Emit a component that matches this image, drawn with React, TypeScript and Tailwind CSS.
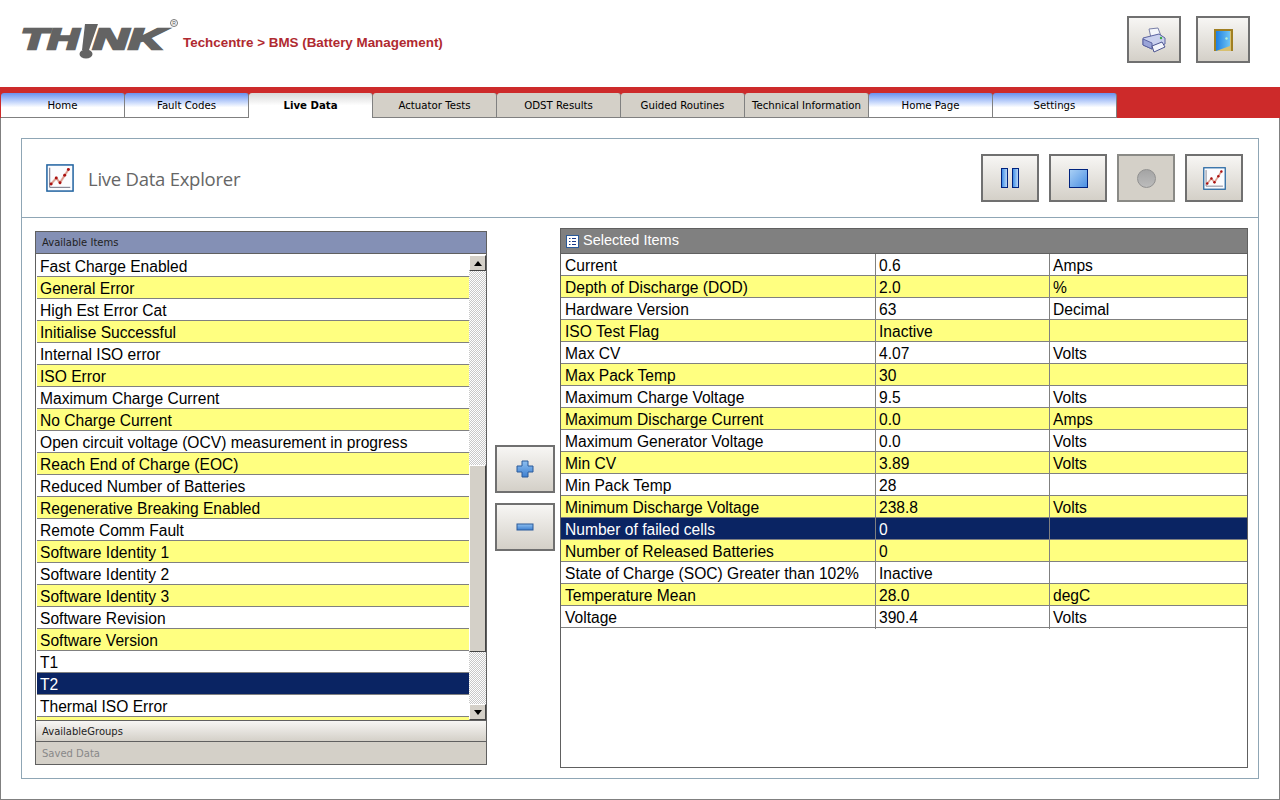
const tabs = [
  { label: "Home", kind: "blue" },
  { label: "Fault Codes", kind: "blue" },
  { label: "Live Data", kind: "active" },
  { label: "Actuator Tests", kind: "grey" },
  { label: "ODST Results", kind: "grey" },
  { label: "Guided Routines", kind: "grey" },
  { label: "Technical Information", kind: "grey" },
  { label: "Home Page", kind: "blue" },
  { label: "Settings", kind: "blue" },
];

const available = [
  "Fast Charge Enabled",
  "General Error",
  "High Est Error Cat",
  "Initialise Successful",
  "Internal ISO error",
  "ISO Error",
  "Maximum Charge Current",
  "No Charge Current",
  "Open circuit voltage (OCV) measurement in progress",
  "Reach End of Charge (EOC)",
  "Reduced Number of Batteries",
  "Regenerative Breaking Enabled",
  "Remote Comm Fault",
  "Software Identity 1",
  "Software Identity 2",
  "Software Identity 3",
  "Software Revision",
  "Software Version",
  "T1",
  "T2",
  "Thermal ISO Error",
];

const selected = [
  ["Current", "0.6", "Amps"],
  ["Depth of Discharge (DOD)", "2.0", "%"],
  ["Hardware Version", "63", "Decimal"],
  ["ISO Test Flag", "Inactive", ""],
  ["Max CV", "4.07", "Volts"],
  ["Max Pack Temp", "30", ""],
  ["Maximum Charge Voltage", "9.5", "Volts"],
  ["Maximum Discharge Current", "0.0", "Amps"],
  ["Maximum Generator Voltage", "0.0", "Volts"],
  ["Min CV", "3.89", "Volts"],
  ["Min Pack Temp", "28", ""],
  ["Minimum Discharge Voltage", "238.8", "Volts"],
  ["Number of failed cells", "0", ""],
  ["Number of Released Batteries", "0", ""],
  ["State of Charge (SOC) Greater than 102%", "Inactive", ""],
  ["Temperature Mean", "28.0", "degC"],
  ["Voltage", "390.4", "Volts"],
];

function rowColor(i: number, isSelected: boolean) {
  if (isSelected) return "bg-[#0a2463] text-white";
  return i % 2 === 1 ? "bg-[#ffff80] text-black" : "bg-white text-black";
}

function ThinkLogo() {
  return (
    <svg width="152" height="46" viewBox="0 0 152 46" className="block">
      <g fill="#636363" stroke="#636363" strokeWidth="2.4" fontFamily="'Liberation Sans', sans-serif" fontWeight="700" fontStyle="italic" fontSize="30">
        <text x="0" y="28" textLength="58" lengthAdjust="spacingAndGlyphs">TH</text>
        <text x="72" y="28" textLength="71" lengthAdjust="spacingAndGlyphs">NK</text>
      </g>
      <path d="M64 3 L77 3 L68 29 L61 29 Z" fill="#636363" />
      <ellipse cx="65" cy="33" rx="6.5" ry="4.5" fill="#636363" />
    </svg>
  );
}

function PrinterIcon() {
  return (
    <svg width="26" height="26" viewBox="0 0 26 26">
      <path d="M8 2 L17 1 L20 9 L10 11 Z" fill="#f4f6fb" stroke="#7a80a8" />
      <path d="M2 11 L18 7 L24 11 L24 17 L11 22 L2 18 Z" fill="#c9d0ee" stroke="#5a62a0" />
      <path d="M2 12 L11 16 L11 22 L2 18 Z" fill="#9aa4d8" stroke="#5a62a0" />
      <path d="M11 19 L21 15 L24 20 L13 25 Z" fill="#f2f4fb" stroke="#4c5490" />
      <circle cx="20" cy="11" r="1.2" fill="#3aa845" />
    </svg>
  );
}

function DoorIcon() {
  return (
    <svg width="19" height="22" viewBox="0 0 19 22">
      <defs>
        <linearGradient id="doorFill" x1="0" x2="1" y1="0" y2="0">
          <stop offset="0" stopColor="#1f7fe0" />
          <stop offset="1" stopColor="#6ec4f4" />
        </linearGradient>
      </defs>
      <path d="M0 0 H19 V22 H17 V2 H2 V22 H0 Z" fill="#a07f22" />
      <path d="M2 2 H17 V22 H2 Z" fill="#d8c070" />
      <path d="M2 2 H16 V17 L2 22 Z" fill="url(#doorFill)" />
      <circle cx="12.5" cy="9.5" r="1.2" fill="#b6f0d0" />
    </svg>
  );
}

function ChartIcon({ size }: { size: number }) {
  return (
    <svg width={size} height={size} viewBox="0 0 30 30">
      <rect x="1" y="1" width="28" height="28" fill="#fbfcfe" stroke="#1f62a0" strokeWidth="1.6" />
      <path d="M4 4 V25 H26" fill="none" stroke="#667" strokeWidth="1" />
      <path d="M5 22 L11 15 L15 20 L24 6" fill="none" stroke="#e8b8a8" strokeWidth="2.5" />
      <path d="M5 22 L11 15 L15 20 L24 6" fill="none" stroke="#c77" strokeWidth="0.7" />
      <circle cx="5.5" cy="21.5" r="1.6" fill="#a11" />
      <circle cx="11" cy="15" r="1.6" fill="#a11" />
      <circle cx="15" cy="20" r="1.6" fill="#a11" />
      <circle cx="20" cy="12" r="1.6" fill="#a11" />
      <circle cx="24" cy="6" r="1.6" fill="#a11" />
    </svg>
  );
}

function ToolButton({ size, disabled, children }: { size: string; disabled?: boolean; children: React.ReactNode }) {
  return (
    <div
      className={`${size} flex items-center justify-center border-2 ${
        disabled ? "border-[#8a8a86] bg-[#d4d0c8]" : "border-[#707070] bg-gradient-to-b from-[#f7f6f4] to-[#d4d0c8]"
      }`}
    >
      {children}
    </div>
  );
}

function ScrollArrow({ up }: { up?: boolean }) {
  return (
    <div className="flex h-[16px] shrink-0 items-center justify-center border border-t-white border-r-[#444] border-b-[#444] border-l-white bg-[#d4d0c8]">
      <svg width="8" height="5" viewBox="0 0 8 5">
        <path d={up ? "M0 5 L4 0 L8 5 Z" : "M0 0 L8 0 L4 5 Z"} fill="#000" />
      </svg>
    </div>
  );
}

export default function App() {
  return (
    <div className="flex h-[800px] w-[1280px] flex-col overflow-hidden bg-white font-['Liberation_Sans',sans-serif] text-black">
      {/* header */}
      <div className="flex h-[87px] shrink-0 items-start pl-[21px]">
        <div className="relative mt-[21px] w-[158px]">
          <ThinkLogo />
          <span className="absolute top-[-2px] left-[149px] flex h-[8px] w-[8px] items-center justify-center rounded-full border border-[#777] text-[5px] leading-none text-[#555]">
            R
          </span>
        </div>
        <div className="mt-[35px] ml-[4px] text-[13.4px] leading-4 font-bold text-[#b02a30]">
          Techcentre &gt; BMS (Battery Management)
        </div>
        <div className="mt-[16px] mr-[30px] ml-auto flex gap-[15px]">
          <ToolButton size="h-[47px] w-[54px]">
            <PrinterIcon />
          </ToolButton>
          <ToolButton size="h-[47px] w-[54px]">
            <DoorIcon />
          </ToolButton>
        </div>
      </div>

      {/* tabs */}
      <div className="flex h-[31px] shrink-0 items-end bg-[#cd2a2a] pl-px">
        {tabs.map((tab) => (
          <div
            key={tab.label}
            className={`flex h-[25px] w-[124px] items-center justify-center rounded-t-[3px] border-r border-[#808080] pt-px font-['DejaVu_Sans',sans-serif] text-[10.2px] ${
              tab.kind === "blue"
                ? "border-b bg-gradient-to-b from-[#6b91ee] via-white via-60% to-white"
                : tab.kind === "grey"
                  ? "border-b bg-[#d4d0c8]"
                  : "bg-gradient-to-b from-[#d8d8d8] via-white via-50% to-white font-bold"
            }`}
          >
            {tab.label}
          </div>
        ))}
      </div>

      {/* main area */}
      <div className="flex min-h-0 flex-1 flex-col border-x border-b border-x-[#808080] border-b-[#808080] px-[20px] pt-[20px] pb-[20px]">
        <div className="flex min-h-0 flex-1 flex-col border border-[#8fa6b5]">
          {/* explorer title bar */}
          <div className="flex h-[79px] shrink-0 items-center border-b border-[#8fa6b5] pr-[15px] pl-[24px]">
            <ChartIcon size={28} />
            <span className="mt-[2px] ml-[14px] font-['Open_Sans',sans-serif] text-[18.5px] tracking-[-0.25px] text-[#666]">Live Data Explorer</span>
            <div className="ml-auto flex gap-[10px]">
              <ToolButton size="h-[48px] w-[58px]">
                <div className="flex gap-[4px]">
                  <div className="h-[20px] w-[7px] border border-[#00237e] bg-gradient-to-r from-[#3d8fe8] to-[#b9d8f6]" />
                  <div className="h-[20px] w-[7px] border border-[#00237e] bg-gradient-to-r from-[#3d8fe8] to-[#b9d8f6]" />
                </div>
              </ToolButton>
              <ToolButton size="h-[48px] w-[58px]">
                <div className="h-[19px] w-[19px] border-[1.5px] border-[#00237e] bg-gradient-to-br from-[#a8cff5] to-[#4a90e2]" />
              </ToolButton>
              <ToolButton size="h-[48px] w-[58px]" disabled>
                <div className="h-[19px] w-[19px] rounded-full border border-[#909090] bg-gradient-to-b from-[#a4a4a4] to-[#bcbcbc]" />
              </ToolButton>
              <ToolButton size="h-[48px] w-[58px]">
                <ChartIcon size={23} />
              </ToolButton>
            </div>
          </div>

          {/* panels */}
          <div className="flex min-h-0 flex-1 items-start pt-[10px] pl-[13px]">
            {/* available items */}
            <div className="mt-[3px] flex h-[534px] w-[452px] shrink-0 flex-col border border-[#606060]">
              <div className="flex h-[22px] shrink-0 items-center border-b border-[#606060] bg-[#8490b5] pl-[6px] font-['DejaVu_Sans',sans-serif] text-[10px] text-[#222]">
                Available Items
              </div>
              <div className="flex min-h-0 flex-1 border-t border-white">
                <div className="ml-px min-w-0 flex-1 overflow-hidden">
                  {[...available, ""].map((name, i) => (
                    <div
                      key={i}
                      className={`flex h-[22px] items-center border-b border-[#808080] pt-[2px] pl-[3px] text-[15.6px] ${rowColor(i, name === "T2")}`}
                    >
                      {name}
                    </div>
                  ))}
                </div>
                <div className="flex w-[17px] shrink-0 flex-col bg-[repeating-conic-gradient(#c8c8c8_0_25%,#ffffff_0_50%)] bg-[length:2px_2px]">
                  <ScrollArrow up />
                  <div className="h-[194px] shrink-0" />
                  <div className="h-[187px] shrink-0 border border-t-white border-r-[#444] border-b-[#444] border-l-white bg-[#d4d0c8]" />
                  <div className="flex-1" />
                  <ScrollArrow />
                </div>
              </div>
              <div className="flex h-[22px] shrink-0 items-center border-y border-[#606060] bg-gradient-to-b from-[#f7f6f4] to-[#d4d0c8] pl-[6px] font-['DejaVu_Sans',sans-serif] text-[10px] text-[#222]">
                AvailableGroups
              </div>
              <div className="flex h-[22px] shrink-0 items-center bg-[#d4d0c8] pl-[6px] font-['DejaVu_Sans',sans-serif] text-[10px] text-[#888]">
                Saved Data
              </div>
            </div>

            {/* add / remove */}
            <div className="mt-[217px] ml-[8px] flex w-[60px] shrink-0 flex-col gap-[10px]">
              <ToolButton size="h-[48px] w-[60px]">
                <svg width="18" height="18" viewBox="0 0 18 18">
                  <defs>
                    <linearGradient id="btnBlue" x1="0" x2="0" y1="0" y2="1">
                      <stop offset="0" stopColor="#8fc0f0" />
                      <stop offset="1" stopColor="#3d7fd0" />
                    </linearGradient>
                  </defs>
                  <path d="M6 1 H12 V6 H17 V12 H12 V17 H6 V12 H1 V6 H6 Z" fill="url(#btnBlue)" stroke="#2a5a9a" />
                </svg>
              </ToolButton>
              <ToolButton size="h-[48px] w-[60px]">
                <svg width="18" height="8" viewBox="0 0 18 8">
                  <rect x="1" y="1" width="16" height="6" fill="url(#btnBlue)" stroke="#2a5a9a" />
                </svg>
              </ToolButton>
            </div>

            {/* selected items */}
            <div className="ml-[5px] flex h-[540px] w-[688px] shrink-0 flex-col border border-[#606060]">
              <div className="flex h-[24px] shrink-0 items-center gap-[4px] bg-[#808080] pl-[5px] text-[14.5px] text-white">
                <svg width="13" height="13" viewBox="0 0 13 13">
                  <rect x="0.5" y="0.5" width="12" height="12" fill="#fff" stroke="#2a5a9a" />
                  <path d="M3 3.5 H4.5 M6 3.5 H10 M3 6.5 H4.5 M6 6.5 H10 M3 9.5 H4.5 M6 9.5 H10" stroke="#1a3a8a" />
                </svg>
                Selected Items
              </div>
              <div className="min-h-0 flex-1 border-t border-[#606060]">
                {selected.map((row, i) => (
                  <div
                    key={row[0]}
                    className={`grid h-[22px] grid-cols-[315px_174px_1fr] items-center border-b border-[#808080] text-[15.6px] ${rowColor(i, row[0] === "Number of failed cells")}`}
                  >
                    <div className="flex h-full items-center border-r border-[#808080] pl-[4px]">{row[0]}</div>
                    <div className="flex h-full items-center border-r border-[#808080] pl-[3px]">{row[1]}</div>
                    <div className="flex h-full items-center pl-[3px]">{row[2]}</div>
                  </div>
                ))}
              </div>
            </div>
          </div>
        </div>
      </div>
    </div>
  );
}
